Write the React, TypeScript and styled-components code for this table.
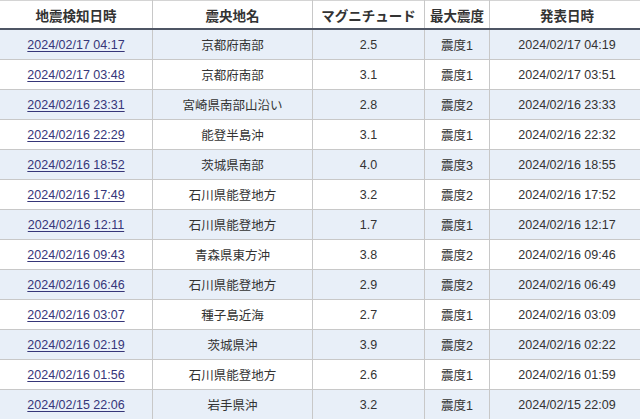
import React from "react";
import styled, { createGlobalStyle } from "styled-components";

const Global = createGlobalStyle`
  html, body { margin: 0; padding: 0; background: #ffffff; }
  body { font-family: "Liberation Sans", Arial, "Noto Sans CJK JP", sans-serif; }
`;

const Table = styled.table`
  width: 640px;
  border-collapse: collapse;
  table-layout: fixed;
  border-top: 1px solid #d4d4d4;
`;

const HeadCell = styled.th<{ $w: number }>`
  width: ${(p) => p.$w}px;
  height: 27px;
  padding: 0;
  background: #ffffff;
  color: #333333;
  font-size: 13.5px;
  font-weight: bold;
  text-align: center;
  border-left: 1px solid #c8c8c8;
  border-bottom: 2px solid #4e5564;
  &:first-child { border-left: none; }
`;

const Row = styled.tr<{ $alt: boolean }>`
  background: ${(p) => (p.$alt ? "#e8eff8" : "#ffffff")};
`;

const Cell = styled.td`
  height: 29px;
  padding: 0;
  color: #333333;
  font-size: 12.5px;
  text-align: center;
  border-left: 1px solid #c8c8c8;
  border-bottom: 1px solid #c8c8c8;
  white-space: nowrap;
  &:first-child { border-left: none; }
`;

const DateLink = styled.a`
  color: #363679;
  text-decoration: underline;
  text-underline-offset: 2px;
  cursor: pointer;
`;

const rows: [string, string, string, string, string][] = [
  ["2024/02/17 04:17", "京都府南部", "2.5", "震度1", "2024/02/17 04:19"],
  ["2024/02/17 03:48", "京都府南部", "3.1", "震度1", "2024/02/17 03:51"],
  ["2024/02/16 23:31", "宮崎県南部山沿い", "2.8", "震度2", "2024/02/16 23:33"],
  ["2024/02/16 22:29", "能登半島沖", "3.1", "震度1", "2024/02/16 22:32"],
  ["2024/02/16 18:52", "茨城県南部", "4.0", "震度3", "2024/02/16 18:55"],
  ["2024/02/16 17:49", "石川県能登地方", "3.2", "震度2", "2024/02/16 17:52"],
  ["2024/02/16 12:11", "石川県能登地方", "1.7", "震度1", "2024/02/16 12:17"],
  ["2024/02/16 09:43", "青森県東方沖", "3.8", "震度2", "2024/02/16 09:46"],
  ["2024/02/16 06:46", "石川県能登地方", "2.9", "震度2", "2024/02/16 06:49"],
  ["2024/02/16 03:07", "種子島近海", "2.7", "震度1", "2024/02/16 03:09"],
  ["2024/02/16 02:19", "茨城県沖", "3.9", "震度2", "2024/02/16 02:22"],
  ["2024/02/16 01:56", "石川県能登地方", "2.6", "震度1", "2024/02/16 01:59"],
  ["2024/02/15 22:06", "岩手県沖", "3.2", "震度1", "2024/02/15 22:09"],
];

const headers: [string, number][] = [
  ["地震検知日時", 152],
  ["震央地名", 159],
  ["マグニチュード", 111],
  ["最大震度", 64],
  ["発表日時", 154],
];

export default function App() {
  return (
    <>
      <Global />
      <Table>
        <thead>
          <tr>
            {headers.map(([h, w]) => (
              <HeadCell key={h} $w={w}>
                {h}
              </HeadCell>
            ))}
          </tr>
        </thead>
        <tbody>
          {rows.map((r, i) => (
            <Row key={i} $alt={i % 2 === 0}>
              <Cell>
                <DateLink>{r[0]}</DateLink>
              </Cell>
              <Cell>{r[1]}</Cell>
              <Cell>{r[2]}</Cell>
              <Cell>{r[3]}</Cell>
              <Cell>{r[4]}</Cell>
            </Row>
          ))}
        </tbody>
      </Table>
    </>
  );
}
